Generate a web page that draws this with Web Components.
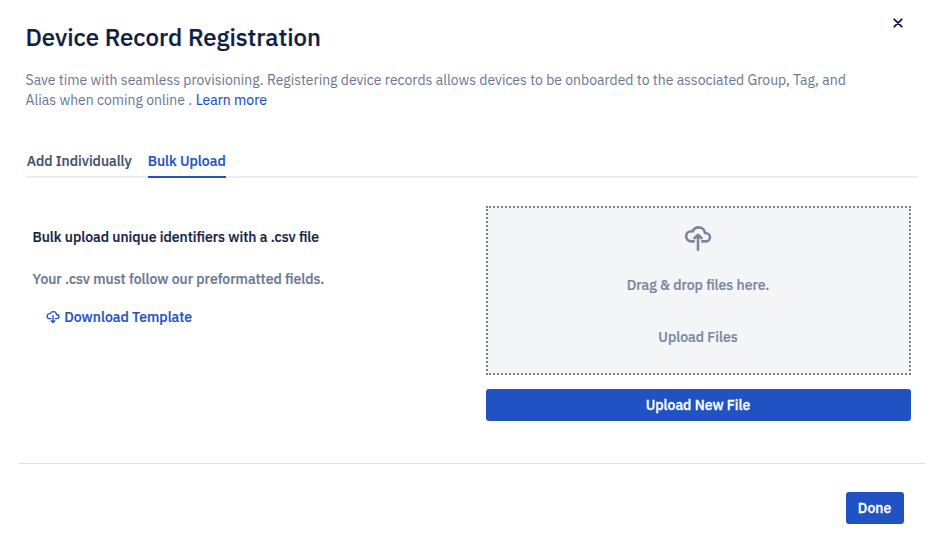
<!DOCTYPE html>
<html lang="en">
<head>
<meta charset="utf-8">
<title>Device Record Registration</title>
<style>
html,body{margin:0;height:100%;background:#fff}
body{font:14px/20px "IBM Plex Sans",Roboto,"Liberation Sans",sans-serif;color:#6b7690;overflow:hidden}
</style>
</head>
<body>
<registration-dialog></registration-dialog>
<script>
customElements.define('cloud-icon', class extends HTMLElement {
  connectedCallback() {
    const down = this.getAttribute('direction') === 'down';
    const arrow = down ? 'M14 11V25M10.4 21.6L14 25L17.6 21.6' : 'M14 25.7V11.5M10.4 14.2L14 10.8L17.6 14.2';
    this.attachShadow({mode:'open'}).innerHTML = `
      <style>:host{display:block;width:28px;height:28px}svg{display:block;width:100%;height:100%;overflow:visible}</style>
      <svg viewBox="0 0 28 28" fill="none" stroke="currentColor" stroke-width="2.6" stroke-linejoin="round">
        <path d="M10.8 17.4H7.4A5.1 5.1 0 0 1 7.2 7.2Q8 7.1 8.8 7.3C9.7 4.8 11.8 3.4 14.5 3.4C18 3.4 20.6 5.7 21 9C23.9 9.1 26 10.8 26 13.2C26 15.7 24.1 17.4 21.6 17.4H17.2"/>
        <path d="${arrow}" stroke-linecap="round"/>
      </svg>`;
  }
});

customElements.define('tab-item', class extends HTMLElement {
  connectedCallback() {
    this.attachShadow({mode:'open'}).innerHTML = `
      <style>
        :host{display:block;box-sizing:border-box;height:27px;color:#42506b;font-weight:500;-webkit-text-stroke:.2px;border-bottom:2px solid transparent;margin-bottom:-2px;white-space:nowrap}
        :host([selected]){color:#2152c4;border-color:#2152c4}
      </style><slot></slot>`;
  }
});

customElements.define('tab-bar', class extends HTMLElement {
  connectedCallback() {
    this.attachShadow({mode:'open'}).innerHTML =
      '<style>:host{display:flex;gap:16px;border-bottom:2px solid #ebecf0;height:25px}</style><slot></slot>';
  }
});

customElements.define('primary-button', class extends HTMLElement {
  connectedCallback() {
    this.attachShadow({mode:'open'}).innerHTML = `
      <style>
        :host{display:block}
        button{display:flex;align-items:center;justify-content:center;width:100%;height:32px;padding:0 1px 0 0;border:0;border-radius:3px;background:#2152c4;color:#fff;font:inherit;font-weight:500;-webkit-text-stroke:.3px}
      </style><button><slot></slot></button>`;
  }
});

customElements.define('drop-zone', class extends HTMLElement {
  connectedCallback() {
    this.attachShadow({mode:'open'}).innerHTML = `
      <style>
        :host{display:flex;flex-direction:column;align-items:center;box-sizing:border-box;height:169px;padding:16px 1px 0 0;border:2px dotted #808080;background:#f4f5f7;color:#7a869e;font-weight:500;-webkit-text-stroke:.2px}
        .hint{margin-top:23px;height:20px}
        .action{margin-top:32px;height:20px}
      </style>
      <cloud-icon direction="up"></cloud-icon>
      <div class="hint">Drag &amp; drop files here.</div>
      <div class="action">Upload Files</div>`;
  }
});

customElements.define('registration-dialog', class extends HTMLElement {
  connectedCallback() {
    this.attachShadow({mode:'open'}).innerHTML = `
      <style>
        :host{display:flex;flex-direction:column;box-sizing:border-box;width:938px;height:540px}
        header{display:flex;justify-content:space-between;height:70px;padding:0 35px 0 25.5px;box-sizing:border-box}
        h1{margin:23px 0 0;font-size:24px;line-height:28px;font-weight:500;color:#0f1e42;-webkit-text-stroke:.2px}
        .close{display:block;margin-top:18px;width:10px;height:10px}
        .intro{padding-left:25.5px;height:40px;white-space:nowrap}
        .intro div{display:flex;gap:3.6px;height:20px}
        a{color:#2152c4;text-decoration:none}
        .intro a{-webkit-text-stroke:.15px}
        tab-bar{margin:41px 21px 0 26.7px}
        main{display:grid;grid-template-columns:1fr 425px;padding:28px 27px 0 32.5px}
        section{font-weight:500;-webkit-text-stroke:.2px}
        .lead{margin-top:21px;height:20px;color:#0f1e42}
        .note{margin-top:22px;height:20px}
        .download{display:flex;align-items:center;gap:4px;margin:18px 0 0 13.8px;height:20px}
        .download cloud-icon{width:14px;height:14px}
        main primary-button{margin-top:14px}
        footer{margin:42px 13px 0 19px;border-top:1px solid #dfdfe1;padding:28px 21px 0 0;display:flex;justify-content:flex-end}
        footer primary-button{width:58px}
      </style>
      <header>
        <h1>Device Record Registration</h1>
        <svg class="close" viewBox="0 0 10 10" role="button" aria-label="Close"><path d="M1.3 1.3L8.7 8.7M8.7 1.3L1.3 8.7" stroke="#0f1e42" stroke-width="1.9" stroke-linecap="round"/></svg>
      </header>
      <div class="intro">
        <div>Save time with seamless provisioning. Registering device records allows devices to be onboarded to the associated Group, Tag, and</div>
        <div><span>Alias when coming online .</span><a>Learn more</a></div>
      </div>
      <tab-bar>
        <tab-item>Add Individually</tab-item>
        <tab-item selected>Bulk Upload</tab-item>
      </tab-bar>
      <main>
        <section>
          <div class="lead">Bulk upload unique identifiers with a .csv file</div>
          <div class="note">Your .csv must follow our preformatted fields.</div>
          <a class="download"><cloud-icon direction="down"></cloud-icon><span>Download Template</span></a>
        </section>
        <div>
          <drop-zone></drop-zone>
          <primary-button>Upload New File</primary-button>
        </div>
      </main>
      <footer><primary-button>Done</primary-button></footer>`;
  }
});
</script>
</body>
</html>
